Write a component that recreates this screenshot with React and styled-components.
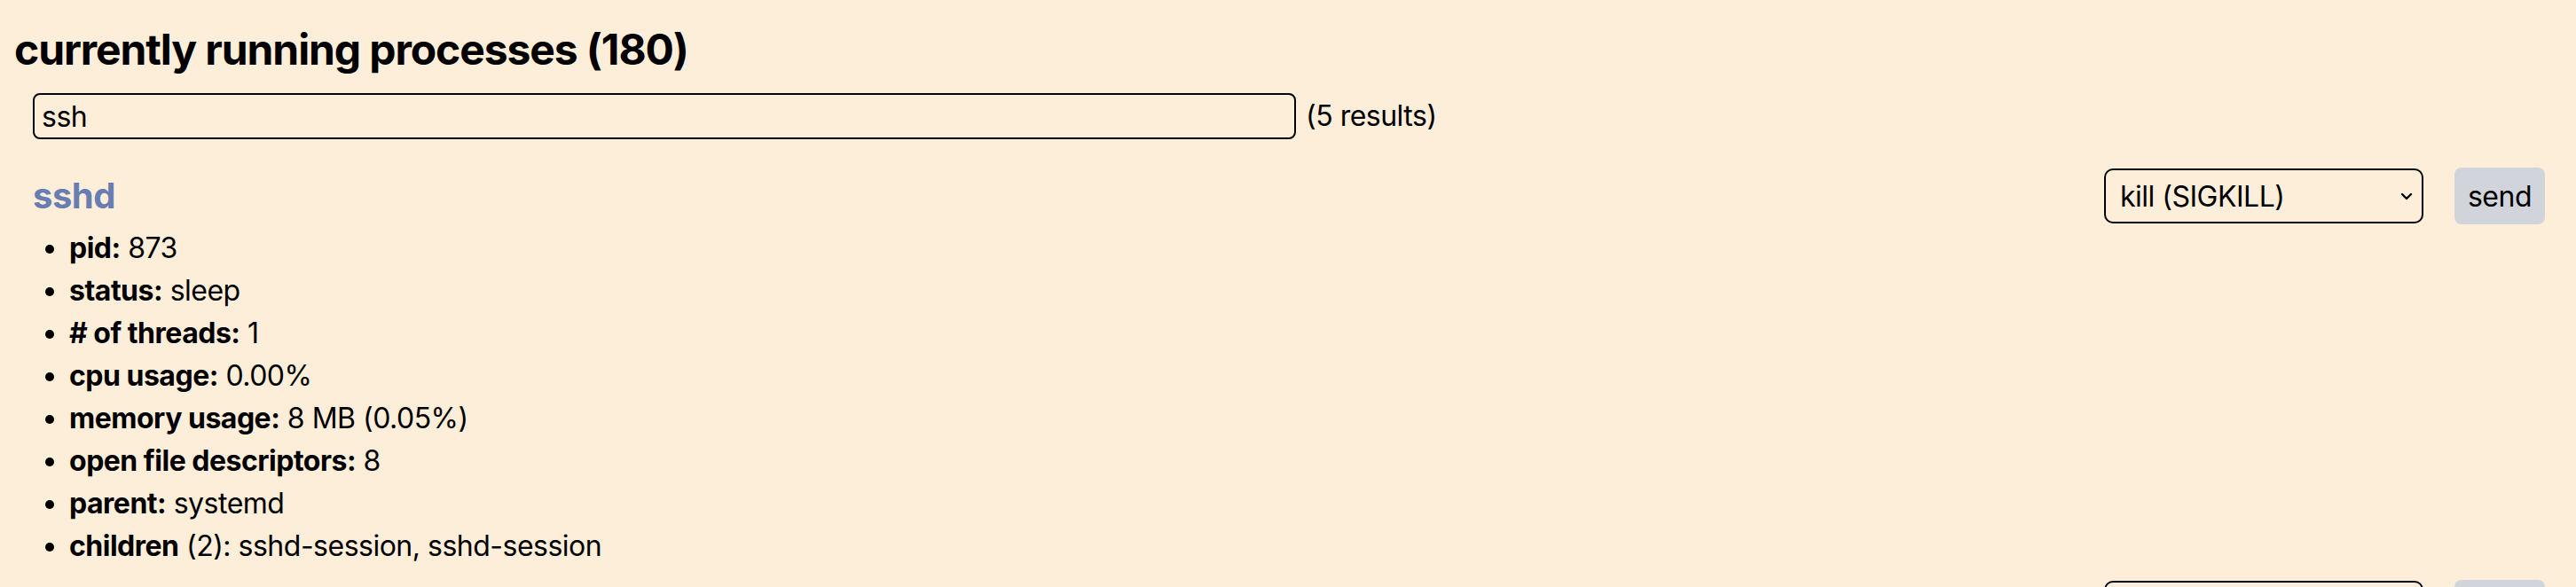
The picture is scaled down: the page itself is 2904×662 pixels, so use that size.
import React from "react"
import styled, { createGlobalStyle } from "styled-components"

const GlobalStyle = createGlobalStyle`
  html, body {
    margin: 0;
    background: #fdeed9;
  }
  body {
    font-family: Inter, "Noto Sans", sans-serif;
    color: #000;
    letter-spacing: -0.5px;
  }
`

const Page = styled.div`
  padding: 16px;
`

const Title = styled.h1`
  margin: 8px 0 0;
  font-size: 48px;
  line-height: 64px;
  font-weight: 700;
  letter-spacing: -1.1px;
`

const SearchRow = styled.div`
  display: flex;
  align-items: center;
  gap: 11px;
  margin-top: 17px;
  padding-left: 21px;
  font-size: 32px;
  line-height: 48px;
`

const SearchInput = styled.input`
  width: 1424px;
  height: 52px;
  box-sizing: border-box;
  border: 2px solid #000;
  border-radius: 8px;
  padding: 0 8px;
  background: transparent;
  font: inherit;
  letter-spacing: inherit;
  color: #000;
  outline: none;
`

const ProcessList = styled.div`
  display: flex;
  flex-direction: column;
  gap: 14px;
  margin-top: 32px;
  padding: 0 19px 0 21px;
`

const ProcessHeader = styled.div`
  display: flex;
  align-items: center;
  justify-content: space-between;
  height: 64px;
`

const ProcessName = styled.a`
  font-size: 40px;
  line-height: 48px;
  font-weight: 700;
  color: #687db2;
  text-decoration: none;
`

const Controls = styled.div`
  display: flex;
  align-items: center;
  gap: 35px;
`

const SelectWrap = styled.div`
  position: relative;
  width: 360px;
  height: 62px;
`

const SignalSelect = styled.select`
  appearance: none;
  width: 100%;
  height: 100%;
  box-sizing: border-box;
  border: 2px solid #000;
  border-radius: 10px;
  padding: 0 16px;
  background: transparent;
  font-family: inherit;
  font-size: 32px;
  letter-spacing: inherit;
  color: #000;
  outline: none;
`

const Chevron = styled.svg`
  position: absolute;
  right: 9px;
  top: 50%;
  width: 20px;
  height: 20px;
  margin-top: -10px;
  pointer-events: none;
`

const SendButton = styled.button`
  width: 102px;
  height: 64px;
  padding: 0;
  border: none;
  border-radius: 8px;
  background: #d1d5db;
  font-family: inherit;
  font-size: 32px;
  letter-spacing: inherit;
  color: #000;
`

const Details = styled.ul`
  margin: 3px 0 0;
  padding-left: 41px;
  font-size: 32px;
  line-height: 48px;
`

const Label = styled.b`
  font-weight: 700;
`

const processes = [
  {
    name: "sshd",
    pid: 873,
    status: "sleep",
    threads: 1,
    cpu: "0.00%",
    memory: "8 MB (0.05%)",
    fds: 8,
    parent: "systemd",
    children: ["sshd-session", "sshd-session"],
  },
  {
    name: "sshd-session",
    pid: 1204,
    status: "sleep",
    threads: 1,
    cpu: "0.00%",
    memory: "11 MB (0.07%)",
    fds: 11,
    parent: "sshd",
    children: ["sshd-session"],
  },
]

const ProcessItem = ({ proc }) => (
  <div>
    <ProcessHeader>
      <ProcessName href="#">{proc.name}</ProcessName>
      <Controls>
        <SelectWrap>
          <SignalSelect defaultValue="SIGKILL">
            <option value="SIGKILL">kill (SIGKILL)</option>
            <option value="SIGTERM">terminate (SIGTERM)</option>
          </SignalSelect>
          <Chevron viewBox="0 0 20 20" fill="none" stroke="#000" strokeWidth="2.4" strokeLinecap="round" strokeLinejoin="round">
            <path d="M5 8l5 5 5-5" />
          </Chevron>
        </SelectWrap>
        <SendButton>send</SendButton>
      </Controls>
    </ProcessHeader>
    <Details>
      <li><Label>pid:</Label> {proc.pid}</li>
      <li><Label>status:</Label> {proc.status}</li>
      <li><Label># of threads:</Label> {proc.threads}</li>
      <li><Label>cpu usage:</Label> {proc.cpu}</li>
      <li><Label>memory usage:</Label> {proc.memory}</li>
      <li><Label>open file descriptors:</Label> {proc.fds}</li>
      <li><Label>parent:</Label> {proc.parent}</li>
      <li>
        <Label>children</Label> ({proc.children.length}): {proc.children.join(", ")}
      </li>
    </Details>
  </div>
)

export default function App() {
  return (
    <Page>
      <GlobalStyle />
      <Title>currently running processes (180)</Title>
      <SearchRow>
        <SearchInput defaultValue="ssh" />
        <span>(5 results)</span>
      </SearchRow>
      <ProcessList>
        {processes.map(p => (
          <ProcessItem key={p.pid} proc={p} />
        ))}
      </ProcessList>
    </Page>
  )
}
